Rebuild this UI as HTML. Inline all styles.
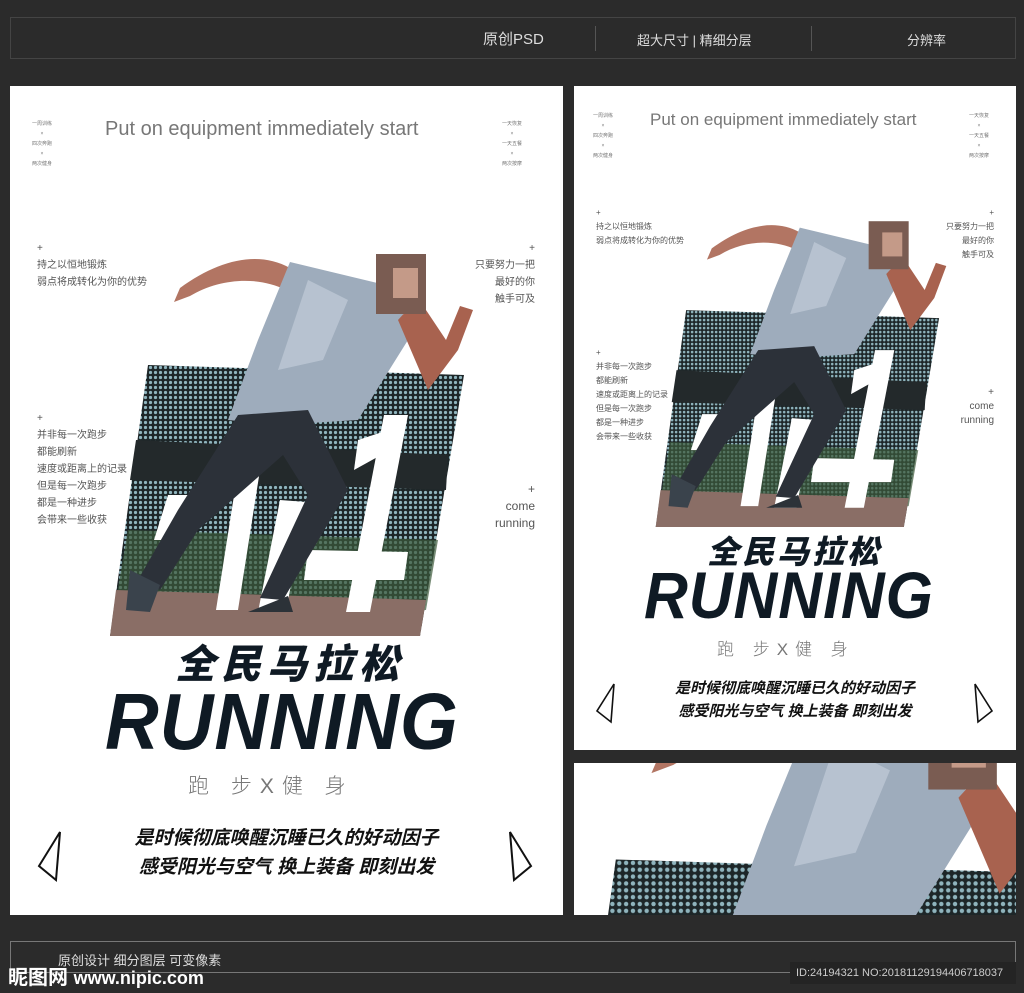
<!DOCTYPE html>
<html><head><meta charset="utf-8"><style>
*{margin:0;padding:0;box-sizing:border-box}
html,body{width:1024px;height:993px;overflow:hidden}
body{background:#2b2b2b;position:relative;font-family:"Liberation Sans","Noto Sans CJK SC",sans-serif}
.a{position:absolute;white-space:nowrap}
.hb{position:absolute;left:10px;top:17px;width:1006px;height:42px;border:1px solid #444}
.hb span{position:absolute;top:10px;color:#ddd;font-size:15px}
.vl{position:absolute;top:8px;width:1px;height:25px;background:#555}
.p{position:absolute;background:#fff;overflow:hidden}
.sm{color:#555;font-size:10px;line-height:17px}
.tiny{color:#777;font-size:5px;line-height:10px;text-align:center}
.g{color:#666;font-weight:300}
.bt{font-weight:900;font-style:italic;color:#0f1a24;line-height:1}
.ln{color:#111;font-weight:bold;font-style:italic;text-align:center}
</style></head><body>
<div class="hb">
<span style="left:472px">原创PSD</span>
<div class="vl" style="left:584px"></div>
<span style="left:626px;font-size:13px;top:12px">超大尺寸 | 精细分层</span>
<div class="vl" style="left:800px"></div>
<span style="left:896px;font-size:13px;top:12px">分辨率</span>
</div>

<svg width="0" height="0" style="position:absolute;left:0;top:0">
<defs>
<pattern id="net" width="5" height="5" patternUnits="userSpaceOnUse"><rect width="5" height="5" fill="#1d2628"/><circle cx="2.5" cy="2.5" r="1.6" fill="#8fb4bd"/></pattern>
<g id="art">
<polygon points="40,125 356,135 312,396 2,396" fill="url(#net)"/>
<polygon points="28,200 340,215 338,250 22,240" fill="#23292b"/>
<polygon points="20,290 330,300 318,370 8,360" fill="#3c5a3a" opacity=".7"/>
<polygon points="8,350 318,360 312,396 2,396" fill="#8a6e66"/>
<polygon points="130,230 152,230 130,370 108,370" fill="#fff"/>
<polygon points="60,255 80,255 66,300 46,300" fill="#fff"/>
<polygon points="250,200 296,185 282,210 246,230" fill="#fff"/>
<polygon points="276,175 300,175 262,372 238,372" fill="#fff"/>
<polygon points="200,310 300,312 296,340 196,340" fill="#fff"/>
<polygon points="172,260 198,262 178,372 150,372" fill="#fff"/>
<path d="M182,28 C150,10 110,20 72,48 L66,62 L82,56 C112,38 150,36 178,50 Z" fill="#b27563"/>
<polygon points="182,22 290,48 300,100 250,180 170,185 120,180 150,100" fill="#9eacbc"/>
<polygon points="200,40 240,60 215,120 170,130" fill="#c2ccd8" opacity=".7"/>
<path d="M290,80 L320,150 L350,110 L365,70 L352,66 L338,100 L310,58 Z" fill="#a8624f"/>
<rect x="268" y="14" width="50" height="60" fill="#7a5c52"/>
<rect x="285" y="28" width="25" height="30" fill="#c49a88"/>
<path d="M130,175 L200,170 L240,250 L175,360 L152,358 L200,255 L175,215 L90,290 L52,350 L30,340 L70,270 Z" fill="#2c3139"/>
<path d="M140,372 L180,356 L185,372 Z" fill="#2c3238"/>
<path d="M22,330 L52,345 L42,372 L18,370 Z" fill="#3a434c"/>
</g>
</defs></svg>

<!-- main poster -->
<div class="p" style="left:10px;top:86px;width:553px;height:829px">
<div class="a tiny" style="left:22px;top:33px">一周训练<br>×<br>四次奔跑<br>×<br>两次健身</div>
<div class="a tiny" style="left:492px;top:33px">一天恢复<br>×<br>一天五餐<br>×<br>两次按摩</div>
<div class="a g" style="left:95px;top:32px;font-size:20px;color:#777">Put on equipment immediately start</div>
<div class="a sm" style="left:27px;top:154px">+<br>持之以恒地锻炼<br>弱点将成转化为你的优势</div>
<div class="a sm" style="right:28px;top:154px;text-align:right">+<br>只要努力一把<br>最好的你<br>触手可及</div>
<div class="a sm" style="left:27px;top:324px">+<br>并非每一次跑步<br>都能刷新<br>速度或距离上的记录<br>但是每一次跑步<br>都是一种进步<br>会带来一些收获</div>
<div class="a" style="right:28px;top:395px;text-align:right;color:#555;font-size:12px;line-height:17px">+<br>come<br>running</div>
<svg class="a" style="left:98px;top:154px" width="367" height="396" viewBox="0 0 367 396"><use href="#art"/></svg>
<div class="a bt" style="left:165px;top:559px;font-size:40px;letter-spacing:6px">全民马拉松</div>
<div class="a bt" style="left:95px;top:596px;font-size:80px;letter-spacing:1px;transform:scaleX(.93);transform-origin:left top">RUNNING</div>
<div class="a g" style="left:178px;top:684px;font-size:21px;letter-spacing:8px;color:#777">跑 步X健 身</div>
<div class="a ln" style="left:0;width:553px;top:738px;font-size:19px;line-height:29px">是时候彻底唤醒沉睡已久的好动因子<br>感受阳光与空气 换上装备 即刻出发</div>
<svg class="a" style="left:26px;top:744px" width="30" height="52"><polygon points="24,2 20,50 3,36" fill="none" stroke="#111" stroke-width="2"/></svg>
<svg class="a" style="left:496px;top:744px" width="30" height="52"><polygon points="4,2 8,50 25,36" fill="none" stroke="#111" stroke-width="2"/></svg>
</div>

<!-- right poster -->
<div class="p" style="left:574px;top:86px;width:442px;height:664px">
<div class="a tiny" style="left:19px;top:25px">一周训练<br>×<br>四次奔跑<br>×<br>两次健身</div>
<div class="a tiny" style="left:395px;top:25px">一天恢复<br>×<br>一天五餐<br>×<br>两次按摩</div>
<div class="a g" style="left:76px;top:24px;font-size:17px;color:#777">Put on equipment immediately start</div>
<div class="a sm" style="left:22px;top:120px;font-size:8px;line-height:14px">+<br>持之以恒地锻炼<br>弱点将成转化为你的优势</div>
<div class="a sm" style="right:22px;top:120px;font-size:8px;line-height:14px;text-align:right">+<br>只要努力一把<br>最好的你<br>触手可及</div>
<div class="a sm" style="left:22px;top:260px;font-size:8px;line-height:14px">+<br>并非每一次跑步<br>都能刷新<br>速度或距离上的记录<br>但是每一次跑步<br>都是一种进步<br>会带来一些收获</div>
<div class="a" style="right:22px;top:300px;text-align:right;color:#555;font-size:10px;line-height:14px">+<br>come<br>running</div>
<svg class="a" style="left:80px;top:124px" width="294" height="317" viewBox="0 0 367 396"><use href="#art"/></svg>
<div class="a bt" style="left:133px;top:450px;font-size:32px;letter-spacing:3px">全民马拉松</div>
<div class="a bt" style="left:70px;top:476px;font-size:66px;letter-spacing:1px;transform:scaleX(.92);transform-origin:left top">RUNNING</div>
<div class="a g" style="left:143px;top:549px;font-size:17px;letter-spacing:7px;color:#777">跑 步X健 身</div>
<div class="a ln" style="left:0;width:442px;top:591px;font-size:15px;line-height:23px">是时候彻底唤醒沉睡已久的好动因子<br>感受阳光与空气 换上装备 即刻出发</div>
<svg class="a" style="left:21px;top:596px" width="24" height="42"><polygon points="19,2 16,40 2,29" fill="none" stroke="#111" stroke-width="1.6"/></svg>
<svg class="a" style="left:397px;top:596px" width="24" height="42"><polygon points="4,2 7,40 21,29" fill="none" stroke="#111" stroke-width="1.6"/></svg>
</div>

<!-- right bottom crop -->
<div class="p" style="left:574px;top:763px;width:442px;height:152px">
<svg class="a" style="left:-13px;top:-75px" width="503" height="543" viewBox="0 0 367 396"><use href="#art"/></svg>
</div>

<div class="a" style="left:10px;top:941px;width:1006px;height:32px;border:1px solid #777"></div>
<div class="a" style="left:58px;top:950px;color:#ddd;font-size:13px">原创设计 细分图层 可变像素</div>
<div class="a" style="left:8px;top:961px;color:#fff;font-size:20px;font-weight:bold">昵图网 <span style="font-size:18px">www.nipic.com</span></div>
<div class="a" style="left:790px;top:962px;width:226px;height:22px;background:#242424;color:#ccc;font-size:11px;line-height:22px;padding-left:6px">ID:24194321 NO:20181129194406718037</div>
</body></html>
